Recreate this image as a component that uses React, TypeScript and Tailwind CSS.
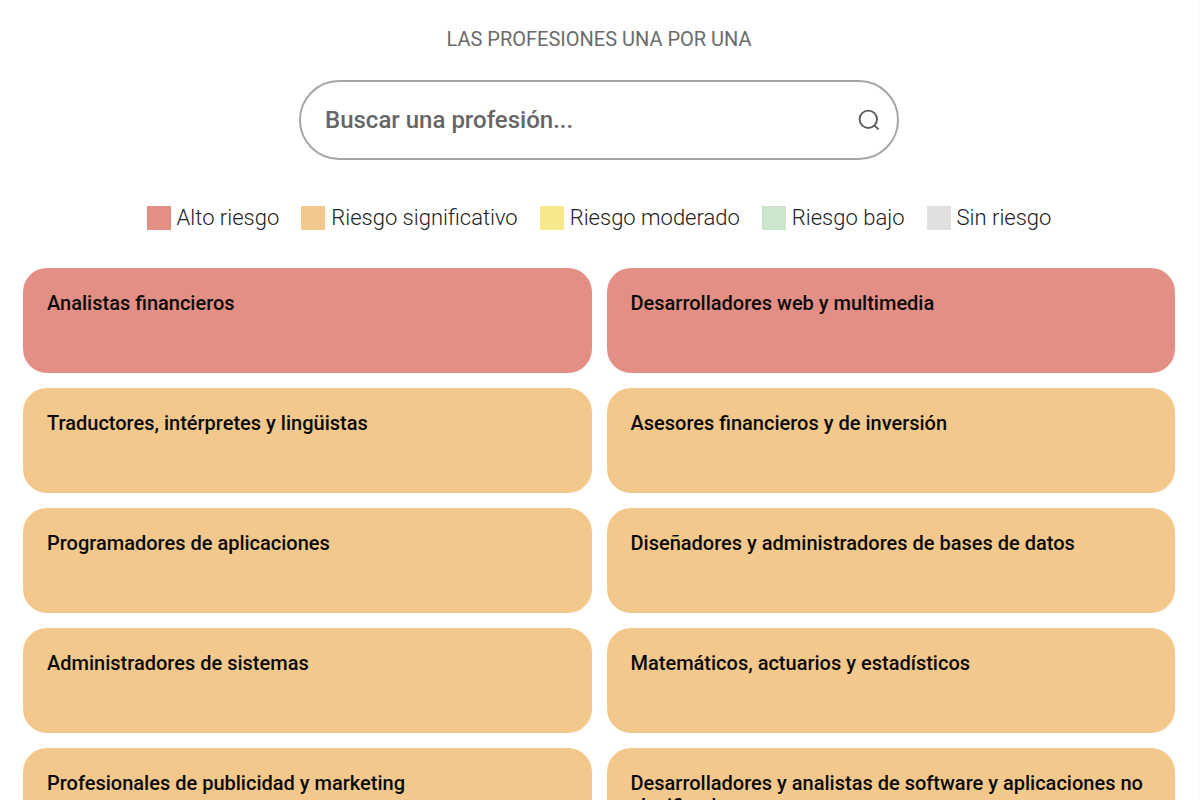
import { useState } from 'react'

type Risk = 'high' | 'significant' | 'moderate' | 'low' | 'none'

interface Profession {
  id: number
  name: string
  risk: Risk
}

const riskColors: Record<Risk, string> = {
  high: 'bg-[#e48f85]',
  significant: 'bg-[#f3c88c]',
  moderate: 'bg-[#f6e88b]',
  low: 'bg-[#cde5cb]',
  none: 'bg-[#dfdfdf]'
}

const legend: { risk: Risk; label: string }[] = [
  { risk: 'high', label: 'Alto riesgo' },
  { risk: 'significant', label: 'Riesgo significativo' },
  { risk: 'moderate', label: 'Riesgo moderado' },
  { risk: 'low', label: 'Riesgo bajo' },
  { risk: 'none', label: 'Sin riesgo' }
]

const professions: Profession[] = [
  { id: 1, name: 'Analistas financieros', risk: 'high' },
  { id: 2, name: 'Desarrolladores web y multimedia', risk: 'high' },
  { id: 3, name: 'Traductores, intérpretes y lingüistas', risk: 'significant' },
  { id: 4, name: 'Asesores financieros y de inversión', risk: 'significant' },
  { id: 5, name: 'Programadores de aplicaciones', risk: 'significant' },
  { id: 6, name: 'Diseñadores y administradores de bases de datos', risk: 'significant' },
  { id: 7, name: 'Administradores de sistemas', risk: 'significant' },
  { id: 8, name: 'Matemáticos, actuarios y estadísticos', risk: 'significant' },
  { id: 9, name: 'Profesionales de publicidad y marketing', risk: 'significant' },
  { id: 10, name: 'Desarrolladores y analistas de software y aplicaciones no clasificados', risk: 'significant' }
]

const SearchIcon = () => (
  <svg className="h-6 w-6 shrink-0" viewBox="0 0 24 24" fill="none" stroke="#5c5c5c" strokeWidth="1.9" aria-hidden="true">
    <circle cx="11.3" cy="11.3" r="8.7" />
    <path d="M17.3 17.5l4.4 3.9" />
  </svg>
)

const App = () => {
  const [query, setQuery] = useState('')

  const results = professions.filter((item) =>
    item.name.toLowerCase().includes(query.trim().toLowerCase())
  )

  return (
    <main className="border-r-2 border-[#fafafa] bg-white pt-6 pr-[23px] pb-6 pl-[23px] font-['Roboto',sans-serif]">
      <h1 className="text-center text-xl leading-[30px] text-[#6b6b6b] uppercase">Las profesiones una por una</h1>

      <label className="mx-auto mt-[26px] flex h-20 w-full max-w-[600px] items-center rounded-full border-2 border-[#a6a6a6] pr-4 pl-6">
        <input
          type="text"
          aria-label="Buscar una profesión"
          placeholder="Buscar una profesión..."
          value={query}
          onChange={(e) => setQuery(e.target.value)}
          className="min-w-0 flex-1 text-2xl font-medium text-[#333333] outline-none placeholder:text-[#666666]"
        />
        <SearchIcon />
      </label>

      <ul className="mt-10 flex flex-wrap justify-center gap-x-[22px] gap-y-2">
        {legend.map((item) => (
          <li key={item.risk} className="flex items-center gap-[6px]">
            <span className={`h-6 w-6 ${riskColors[item.risk]}`} />
            <span className="text-[22px] leading-9 font-light text-[#222222]">{item.label}</span>
          </li>
        ))}
      </ul>

      <ul className="mt-8 grid grid-cols-2 gap-[15px]">
        {results.map((item) => (
          <li key={item.id} className={`min-h-[105px] rounded-3xl p-6 ${riskColors[item.risk]}`}>
            <h2 className="text-xl leading-[23px] font-medium text-[#0a0a0a]">{item.name}</h2>
          </li>
        ))}
      </ul>
    </main>
  )
}

export default App
